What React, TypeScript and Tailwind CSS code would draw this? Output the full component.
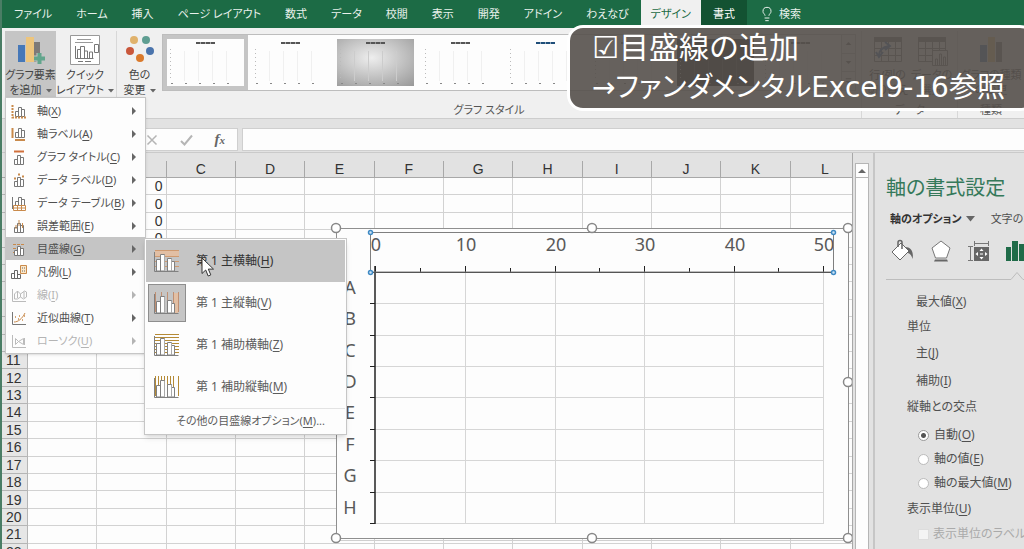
import { useState } from 'react'
import type { ReactNode } from 'react'
import { Lightbulb } from 'lucide-react'
import clsx from 'clsx'

const TABS = [
  'ファイル', 'ホーム', '挿入', 'ページ レイアウト', '数式', 'データ', '校閲', '表示', '開発', 'アドイン', 'わえなび',
]

const COLUMNS = ['A', 'B', 'C', 'D', 'E', 'F', 'G', 'H', 'I', 'J', 'K', 'L']
const ROWS = Array.from({ length: 22 }, (_, i) => i + 1)

const ORANGE = '#c98a4b'
const GRAY = '#777777'

// Label with an underlined access key, e.g. 軸(X)
function Key({ text, k, after = '' }: { text: string; k: string; after?: string }) {
  return (
    <span className="whitespace-nowrap">
      {text}(<span className="underline underline-offset-2">{k}</span>){after}
    </span>
  )
}

function Caret() {
  return (
    <svg width="6" height="4" viewBox="0 0 6 4" className="inline-block align-middle ml-1">
      <path d="M0 0h6L3 3.5z" fill="#666" />
    </svg>
  )
}

// ── Element menu icons ──────────────────────────────────────

function Bars({ color = GRAY }: { color?: string }) {
  return (
    <g fill="#fff" stroke={color}>
      <path d="M4.5 14.5v-5h3v5zM7.5 14.5v-9h3v9zM10.5 14.5v-7h3v7z" />
    </g>
  )
}

const MENU_ICONS: Record<string, ReactNode> = {
  axis: (
    <>
      <g transform="translate(0 -1)"><Bars /></g>
      <path d="M1.5 2v12.500H16" stroke={ORANGE} strokeWidth="2" strokeDasharray="2 1" fill="none" />
    </>
  ),
  axisTitle: (
    <>
      <g transform="translate(0 -3)"><Bars /></g>
      <path d="M1.5 2v10" stroke={ORANGE} strokeWidth="2" />
      <path d="M4 14h10" stroke={ORANGE} strokeWidth="2" />
    </>
  ),
  title: (
    <>
      <path d="M3 2.5h10" stroke="#d0703c" strokeWidth="2" />
      <g transform="translate(-1 1)"><Bars /></g>
    </>
  ),
  dataLabel: (
    <>
      <path d="M3 6.500h2M7 2.500h2M11 4.500h2" stroke={ORANGE} strokeWidth="2" />
      <g transform="translate(-1 0)"><Bars /></g>
    </>
  ),
  dataTable: (
    <>
      <path d="M1.5 2v12" stroke={GRAY} />
      <g transform="translate(0 -3)"><Bars /></g>
      <path d="M2.500 10.500h12v5h-12zM2.500 13h12M6.500 10.500v5M10.500 10.500v5" stroke={ORANGE} fill="#fff" />
    </>
  ),
  errorBar: (
    <>
      <g transform="translate(-1 0)"><Bars /></g>
      <path d="M8 2v6M5 7v4M11.500 5v5" stroke={ORANGE} />
    </>
  ),
  grid: (
    <>
      <path d="M2 3.5h12M2 7.5h12M2 11.5h12" stroke={ORANGE} strokeDasharray="3 1" />
      <g transform="translate(-1 0)"><Bars /></g>
    </>
  ),
  legend: (
    <>
      <path d="M.5 14.500v-5h3v5zM3.500 14.500v-8h3v8zM6.500 14.500v-4h3v4z" fill="#fff" stroke="#666" />
      <path d="M9.500 1.500h6v8h-6z" fill="#fbe7c8" stroke={ORANGE} />
      <path d="M11 4h1M13 4h1M11 7h1M13 7h1" stroke="#666" />
    </>
  ),
  line: (
    <path d="M1.500 2v12.500h13.500M3.500 12V7l3-3 3 3 4-3 2 1v5l-3 2-3-2-3 2zM6.500 4v7M9.500 7v3M13 4.500V11" stroke="#bbb" fill="none" />
  ),
  trend: (
    <>
      <path d="M1.5 2v12.500h13.500" stroke={GRAY} fill="none" />
      <path d="M3 12c4 0 8-3 11-9" stroke={ORANGE} fill="none" />
      <path d="M4 7h1M7 9h1M8 6h1M11 10h1M13 6h1" stroke={ORANGE} strokeWidth="1.500" />
    </>
  ),
  updown: (
    <>
      <path d="M1.5 2v12.500h13.500" stroke="#bbb" fill="none" />
      <path d="M4.500 5.500l3 3-3 3zM7.500 8.500l5-3v6zM13.500 5v7" stroke="#bbb" fill="none" />
    </>
  ),
}

const MENU = [
  { icon: 'axis', text: '軸', k: 'X' },
  { icon: 'axisTitle', text: '軸ラベル', k: 'A' },
  { icon: 'title', text: 'グラフ タイトル', k: 'C' },
  { icon: 'dataLabel', text: 'データ ラベル', k: 'D' },
  { icon: 'dataTable', text: 'データ テーブル', k: 'B' },
  { icon: 'errorBar', text: '誤差範囲', k: 'E' },
  { icon: 'grid', text: '目盛線', k: 'G', active: true },
  { icon: 'legend', text: '凡例', k: 'L' },
  { icon: 'line', text: '線', k: 'I', disabled: true },
  { icon: 'trend', text: '近似曲線', k: 'T' },
  { icon: 'updown', text: 'ローソク', k: 'U', disabled: true },
]

function ElementMenu() {
  return (
    <div role="menu" className="absolute left-[3px] top-[97px] w-[141px] py-px bg-[#fdfdfd] border border-[#c6c6c6] shadow-sm z-20">
      {MENU.map((m) => (
        <button
          key={m.icon}
          role="menuitem"
          disabled={m.disabled}
          className={clsx(
            'w-full h-[23px] flex items-center pl-[5px] pr-2 text-[11px] leading-4',
            m.active && 'bg-[#c5c5c5]',
            m.disabled ? 'text-[#b4b4b4]' : 'text-[#505050]',
          )}
        >
          <svg width="16" height="16" viewBox="0 0 16 16" className="shrink-0">{MENU_ICONS[m.icon]}</svg>
          <span className="ml-[10px] flex-1 text-left"><Key text={m.text} k={m.k} /></span>
          <svg width="5" height="8" viewBox="0 0 5 8" className="shrink-0">
            <path d="M0 0l4 4-4 4z" fill={m.disabled ? '#b4b4b4' : '#666'} />
          </svg>
        </button>
      ))}
    </div>
  )
}

// ── Gridline submenu ────────────────────────────────────────

function GridIcon({ lines, color, fill }: { lines: string; color: string; fill?: string }) {
  return (
    <svg width="26" height="24" viewBox="0 0 26 24">
      {fill && <path d={fill} fill="#e2bfa4" />}
      <path d={lines} stroke={color} fill="none" />
      <path d="M2.500 22V10.500h4V22zM6.500 22V5.500h4V22zM13.500 22V9.500h4V22zM17.500 22v-9.500h3V22z" fill="#fff" stroke="#808080" />
      <path d="M10 6h1v16h-1zM17 10h1v12h-1z" fill="#aaa" />
      <path d="M.5 3v19.500h24" stroke="#808080" fill="none" />
    </svg>
  )
}

const GRIDLINES = [
  { text: '第 1 主横軸', k: 'H', color: '#cf9a70', fill: 'M1 2h24v5H1z', lines: 'M1 1.500h24M1 7.500h24M1 12.500h24M1 17.500h24' },
  { text: '第 1 主縦軸', k: 'V', color: '#c08f72', fill: 'M20 2h4v20h-4z', lines: 'M1.500 1v20M7.500 1v20M13.500 1v20M19.500 1v20M24.500 1v20' },
  { text: '第 1 補助横軸', k: 'Z', color: '#b58a35', lines: 'M1 1.500h24M1 4.500h24M1 7.500h24M1 10.500h24M1 13.500h24M1 16.500h24M1 19.500h24' },
  { text: '第 1 補助縦軸', k: 'M', color: '#b58a35', lines: 'M1.500 1v20M4.500 1v20M7.500 1v20M10.500 1v20M13.500 1v20M16.500 1v20M19.500 1v20M24.500 1v20' },
]

function GridlineMenu() {
  return (
    <div role="menu" className="absolute left-[142px] top-[238px] w-[203px] p-px bg-[#fdfdfd] border border-[#c6c6c6] shadow-md text-[12px] leading-4 text-[#5c5c5c] z-30">
      {GRIDLINES.map((g, i) => (
        <button
          key={g.k}
          role="menuitem"
          className={clsx('w-full h-[42px] flex items-center pl-0.5 gap-[10px]', i === 0 && 'bg-[#c5c5c5] text-[#333]')}
        >
          <span className={clsx('w-[38px] h-[38px] flex items-center justify-center', i === 1 && 'bg-[#c5c5c5] border border-[#8e8e8e]')}>
            <GridIcon lines={g.lines} color={g.color} fill={g.fill} />
          </span>
          <Key text={g.text} k={g.k} />
        </button>
      ))}
      <button role="menuitem" className="w-full h-[25px] pl-[30px] text-left text-[11px] border-t border-[#e3e3e3]">
        <Key text="その他の目盛線オプション" k="M" after="..." />
      </button>
      {/* Mouse pointer */}
      <svg width="14" height="21" viewBox="0 0 14 21" className="absolute left-[56px] top-[18px]">
        <path d="M1 1v15.500l3.700-3.500 2.500 6 2.600-1.100-2.500-5.800h5.200z" fill="#fff" stroke="#333" />
      </svg>
    </div>
  )
}

// ── Ribbon ──────────────────────────────────────────────────

function AddElementIcon() {
  return (
    <svg width="30" height="32" viewBox="0 0 30 32">
      <path d="M2 11h7v17H2z" fill="#4678b8" />
      <path d="M10 3h8v25h-8z" fill="#edc57c" />
      <path d="M18 8h6v20h-6z" fill="#7d7a78" />
      <path d="M23.500 19v11M18 24.500h11" stroke="#c5c5c5" strokeWidth="6" />
      <path d="M23.500 19v11M18 24.500h11" stroke="#62a58c" strokeWidth="4" />
    </svg>
  )
}

function QuickLayoutIcon() {
  return (
    <svg width="32" height="32" viewBox="0 0 32 32" fill="none" stroke="#777">
      <path d="M1.500 1.500h29v29h-29z" fill="#fff" stroke="#999" />
      <path d="M8 5.500h14M6 8.500h18" stroke="#999" />
      <path d="M6.500 12v12.500h18M8.500 24V15.500h3V24M11.500 24V12.500h4V24M15.500 24v-7h3v7M20.500 24v-6h3v6" />
      <path d="M25.500 10.500h4v8h-4zM9 27.500h5M16 27.500h6" />
    </svg>
  )
}

function ColorsIcon() {
  return (
    <svg width="32" height="32" viewBox="0 0 32 32">
      <circle cx="10" cy="6" r="4" fill="#e0b26c" />
      <circle cx="22" cy="6" r="4" fill="#5f9e92" />
      <circle cx="6" cy="17" r="4" fill="#c9573b" />
      <circle cx="26" cy="17" r="4" fill="#4a74ac" />
      <circle cx="16" cy="24" r="4" fill="#da7a2c" />
    </svg>
  )
}

function TableIcon({ swap = false }: { swap?: boolean }) {
  return (
    <svg width="32" height="32" viewBox="0 0 32 32" fill="none" stroke="#777">
      <path d="M2.500 3.500h27v24h-27z" fill="#fff" />
      <path d="M2 3h28v5H2z" fill="#777" stroke="none" />
      <path d="M2 14.500h28M2 21.500h28M9.500 8v20M16.500 8v20M23.500 8v20" />
      {swap ? (
        <path d="M7 22c0-6 4-9 10-10M13 8l5 4-5 4M4 18l3 5 4-5" stroke="#3f76b8" strokeWidth="2" />
      ) : (
        <path d="M16.500 16.500h15v15h-15zM19.500 31v-6h2v6M23.500 31V20h2v11M27.500 31v-8h2v8" fill="#fff" />
      )}
    </svg>
  )
}

function ChartTypeIcon() {
  return (
    <svg width="32" height="32" viewBox="0 0 32 32">
      <path d="M5 11h7v17H5z" fill="#4678b8" />
      <path d="M13 3h7v25h-7z" fill="#edc57c" />
      <path d="M21 8h6v20h-6z" fill="#7d7a78" />
    </svg>
  )
}

function RibbonButton({ icon, lines, caret, pressed, className }: {
  icon: ReactNode
  lines: string[]
  caret?: boolean
  pressed?: boolean
  className: string
}) {
  return (
    <button
      className={clsx(
        'flex flex-col items-center shrink-0 pt-[3px] text-[11px] leading-[15px] text-[#444] whitespace-nowrap',
        pressed && 'bg-[#c5c5c5]',
        className,
      )}
    >
      {icon}
      <span className="mt-px">{lines[0]}</span>
      <span>{lines[1]}{caret && <Caret />}</span>
    </button>
  )
}

const STYLES = ['selected', 'plain', 'shade', 'plain', 'blue', 'plain', 'dark', 'plain']

function StyleThumb({ kind }: { kind: string }) {
  const dark = kind === 'dark'
  return (
    <button
      aria-label="グラフ スタイル"
      className={clsx('w-[85px] h-[55px] shrink-0 p-1', kind === 'selected' && 'bg-[#c5c5c5]')}
    >
      <svg width="77" height="47" viewBox="0 0 77 47">
        <defs>
          <radialGradient id="shade" cx=".45" cy=".4" r=".8">
            <stop offset="0" stopColor="#eee" />
            <stop offset="1" stopColor="#999" />
          </radialGradient>
        </defs>
        <path d="M0 0h77v47H0z" fill={dark ? '#222' : kind === 'shade' ? 'url(#shade)' : '#fdfdfd'} />
        <path d="M29 4h19" stroke={kind === 'blue' ? '#1f4e79' : '#555'} strokeWidth="2" strokeDasharray="4 .5 5 .5" />
        <path d="M3.500 10v32" stroke="#bbb" strokeDasharray="1 3" />
        <path d="M4 44.500h70" stroke="#888" strokeDasharray="2 12" />
        <path d="M17.500 12v30M31.500 12v30M45.500 12v30M59.500 12v30" stroke={kind === 'shade' ? '#ccc' : dark ? '#444' : '#f0f0f0'} />
      </svg>
    </button>
  )
}

function GroupLabel({ children }: { children: ReactNode }) {
  return <div className="text-center text-[11px] leading-4 text-[#555] mt-auto">{children}</div>
}

function Ribbon() {
  return (
    <div className="h-[91px] shrink-0 flex bg-[#f0f0f0] border-b border-[#cdcdcd] pt-[3px] pl-[3px]">
      <div className="flex items-start w-[112px] shrink-0 border-r border-[#d8d8d8]">
        <RibbonButton className="w-[51px] h-[66px]" icon={<AddElementIcon />} lines={['グラフ要素', 'を追加']} caret pressed />
        <RibbonButton className="w-[58px] h-[66px]" icon={<QuickLayoutIcon />} lines={['クイック', 'レイアウト']} caret />
      </div>
      <div className="flex flex-col flex-1 min-w-0">
        <div className="flex">
          <RibbonButton className="w-[45px]" icon={<ColorsIcon />} lines={['色の', '変更']} caret />
          <div className="flex flex-1 min-w-0 h-[57px] mt-[3px] mr-[5px] border border-[#bdbdbd] bg-[#fdfdfd]">
            <div className="flex flex-1 min-w-0 overflow-hidden">
              {STYLES.map((s, i) => <StyleThumb key={i} kind={s} />)}
            </div>
            <div className="w-[14px] flex flex-col border-l border-[#bdbdbd] divide-y divide-[#bdbdbd] bg-[#f0f0f0]">
              {['M4 5h6L7 2z', 'M4 2h6L7 5z', 'M4 0h6v1H4zM4 3h6L7 6z'].map((d) => (
                <button key={d} aria-label="スクロール" className="flex-1 flex items-center">
                  <svg width="13" height="7" viewBox="0 0 14 7"><path d={d} fill="#666" /></svg>
                </button>
              ))}
            </div>
          </div>
        </div>
        <GroupLabel>グラフ スタイル</GroupLabel>
      </div>
      <div className="flex flex-col w-[96px] shrink-0 border-l border-[#d8d8d8]">
        <div className="flex justify-center">
          <RibbonButton className="w-[44px]" icon={<TableIcon swap />} lines={['行/列の', '切り替え']} />
          <RibbonButton className="w-[44px]" icon={<TableIcon />} lines={['データの', '選択']} />
        </div>
        <GroupLabel>データ</GroupLabel>
      </div>
      <div className="flex flex-col w-[67px] shrink-0 border-l border-[#d8d8d8]">
        <RibbonButton className="w-full" icon={<ChartTypeIcon />} lines={['グラフの種類', 'の変更']} />
        <GroupLabel>種類</GroupLabel>
      </div>
    </div>
  )
}

function TabBar() {
  return (
    <nav className="h-7 shrink-0 flex items-stretch bg-[#1c6b45] text-[#e9f1ec] text-[11px] leading-4 whitespace-nowrap">
      {TABS.map((t) => <button key={t} className="px-3">{t}</button>)}
      <button className="px-[10px] bg-[#f0f0f0] text-[#1c6b45]">デザイン</button>
      <button className="px-3 bg-[#135232] text-white">書式</button>
      <button className="px-3 flex items-center gap-1">
        <Lightbulb size={16} strokeWidth={1.5} />検索
      </button>
    </nav>
  )
}

function FormulaBar() {
  return (
    <div className="h-[34px] shrink-0 flex gap-1 pt-[9px] pb-px pl-[3px] bg-[#e2e2e2] border-b border-[#cacaca]">
      <input aria-label="名前ボックス" className="w-[110px] bg-[#fdfdfd] border border-[#cfcfcf]" />
      <div className="w-[119px] flex items-center justify-between pl-[26px] pr-3 bg-[#fdfdfd] border border-[#cfcfcf]">
        <button aria-label="キャンセル">
          <svg width="12" height="12" viewBox="0 0 12 12"><path d="M1.500 1.500l9 9M10.500 1.500l-9 9" stroke="#b5b5b5" strokeWidth="1.500" /></svg>
        </button>
        <button aria-label="入力">
          <svg width="13" height="12" viewBox="0 0 13 12"><path d="M1 7l3.500 3.500L12 1.500" stroke="#b5b5b5" strokeWidth="2" fill="none" /></svg>
        </button>
        <button className="font-['Liberation_Serif',serif] italic font-bold text-[15px] leading-4 text-[#666]">
          f<span className="text-[11px]">x</span>
        </button>
      </div>
      <input aria-label="数式バー" className="flex-1 min-w-0 bg-[#fdfdfd] border border-r-0 border-[#cfcfcf]" />
    </div>
  )
}

// ── Sheet ───────────────────────────────────────────────────

const X_STEPS = [375, 465, 555, 644, 734, 823]
const Y_STEPS = [272, 303, 335, 366, 397, 429, 460, 492, 523]
const HANDLES = [[336, 228], [592, 228], [848, 228], [336, 382], [848, 382], [336, 538], [592, 538], [848, 538]]

function Chart() {
  return (
    <svg
      width="524"
      height="322"
      viewBox="330 222 524 322"
      className="absolute left-[328px] top-[69px] font-['Noto_Sans',sans-serif]"
    >
      <rect x="336.500" y="228.500" width="512" height="310" fill="#fdfdfd" stroke="#8f8f8f" />
      <path d="M338 540.500h510" stroke="#cfcfcf" />

      {/* Gridlines */}
      {X_STEPS.slice(1).map((x) => <path key={x} d={`M${x}.5 272v251`} stroke="#d6d6d6" />)}
      {Y_STEPS.slice(1).map((y) => <path key={y} d={`M375 ${y}.5h449`} stroke="#d6d6d6" />)}

      {/* Axes and ticks */}
      <path d="M375 266v258" stroke="#222" strokeWidth="1.500" />
      {Y_STEPS.slice(1).map((y) => <path key={y} d={`M370 ${y}.5h5`} stroke="#222" />)}
      {X_STEPS.map((x) => <path key={x} d={`M${x}.5 266v6`} stroke="#222" />)}
      {[420, 510, 599, 689, 778].map((x) => <path key={x} d={`M${x}.5 268v4`} stroke="#222" />)}

      <g fontSize="18" fill="#595959" textAnchor="middle">
        {X_STEPS.map((x, i) => <text key={x} x={x + 1} y="251">{i * 10}</text>)}
        {['A', 'B', 'C', 'D', 'E', 'F', 'G', 'H'].map((c, i) => (
          <text key={c} x="350" y={Y_STEPS[i] + 22}>{c}</text>
        ))}
      </g>

      {/* Selected axis */}
      <path d="M370.500 232.500h463v39.500h-463z" fill="none" stroke="#7f7f7f" />
      <path d="M370 272.500h464" stroke="#555" />
      {[[370.5, 232.5], [833.5, 232.5], [370.5, 272.5], [833.5, 272.5]].map(([x, y]) => (
        <circle key={`${x}-${y}`} cx={x} cy={y} r="2" fill="#cfe4f5" stroke="#3f8ac4" strokeWidth="1.500" />
      ))}
      {HANDLES.map(([x, y]) => (
        <circle key={`${x}-${y}`} cx={x} cy={y} r="4.500" fill="#fff" stroke="#888" strokeWidth="1.500" />
      ))}
    </svg>
  )
}

function Sheet() {
  return (
    <div className="relative flex-1 min-w-0 overflow-hidden pt-2 border-r border-[#a8a8a8]">
      <table className="table-fixed w-[858px] h-[400px] border-separate border-spacing-0 bg-[#fdfdfd] font-['Liberation_Sans',sans-serif] text-[14px] leading-4 text-[#333]">
        <thead>
          <tr className="h-[17px] bg-[#e2e2e2]">
            <th className="w-[26px] p-0 border-r border-b border-[#a8a8a8]" />
            {COLUMNS.map((c) => <th key={c} className="p-0 font-normal border-r border-b border-[#a8a8a8]">{c}</th>)}
          </tr>
        </thead>
        <tbody>
          {ROWS.map((r) => (
            <tr key={r}>
              <th className="p-0 pl-1 text-left font-normal bg-[#e6e6e6] border-r border-b border-[#b5b5b5]">{r}</th>
              {COLUMNS.map((c) => (
                <td key={c} className="p-0 pr-[3px] text-right border-r border-b border-[#d2d2d2]">
                  {c === 'B' && r < 11 ? 0 : ''}
                </td>
              ))}
            </tr>
          ))}
        </tbody>
      </table>
      <Chart />
    </div>
  )
}

// ── Format axis pane ────────────────────────────────────────

const CROSSINGS = [
  { text: '自動', k: 'O' },
  { text: '軸の値', k: 'E' },
  { text: '軸の最大値', k: 'M' },
]

function FormatPane() {
  const [crossing, setCrossing] = useState('O')

  return (
    <aside className="w-[151px] shrink-0 overflow-hidden pl-[11px] pt-[23px] border-l-2 border-[#c6c6c6] text-[12px] leading-6 text-[#505050] whitespace-nowrap">
      <h2 className="text-[20px] leading-6 text-[#35795a]">軸の書式設定</h2>
      <div className="flex items-center mt-[7px] pl-1">
        <button className="font-bold text-[11px] text-[#333] flex items-center gap-1">
          軸のオプション
          <svg width="9" height="6" viewBox="0 0 9 6"><path d="M0 0h9L4.500 5.500z" fill="#666" /></svg>
        </button>
        <button className="ml-4 text-[11px]">文字のオプション</button>
      </div>
      <div className="flex items-center gap-[14px] mt-1 pl-[5px] h-8">
        <button aria-label="塗りつぶしと線">
          <svg width="24" height="24" viewBox="0 0 24 24">
            <path d="M10 4l8 8-9 9-8-8z" fill="#fff" stroke="#666" />
            <path d="M7 8V3.500a2 2 0 0 1 4 0V10" fill="none" stroke="#666" strokeWidth="1.500" />
            <path d="M14 8c6 0 9 5 7.500 12-1-4-3-6-5-6l1.500-2z" fill="#666" />
          </svg>
        </button>
        <button aria-label="効果">
          <svg width="24" height="24" viewBox="0 0 24 24">
            <path d="M12 2l9 7-3.500 10h-11L3 9z" fill="#fff" stroke="#777" />
            <path d="M6 20.500h12l1 2H5z" fill="#666" />
          </svg>
        </button>
        <button aria-label="サイズとプロパティ">
          <svg width="24" height="24" viewBox="0 0 24 24">
            <path d="M7 4.500h15M7.500 2v5M21.500 2v5M3.500 7v15M1 7.500h5M1 21.500h5" stroke="#777" />
            <path d="M7 8h15v14H7z" fill="#666" />
            <path d="M14.500 9.500l2 2.500h-4zM14.500 20.500l2-2.500h-4zM8.500 15l2.500-2v4zM20.500 15L18 13v4z" fill="#fff" />
            <path d="M13 15h3" stroke="#fff" />
          </svg>
        </button>
        <button aria-label="軸のオプション">
          <svg width="24" height="24" viewBox="0 0 24 24">
            <path d="M1 8h5v14H1zM7 2h6v20H7zM14 5h5v17h-5zM20 10h4v12h-4z" fill="#1f6b48" />
          </svg>
        </button>
      </div>
      <svg width="150" height="14" viewBox="0 0 150 14" className="block max-w-none">
        <path d="M0 12.500h125l6-7 6 7h13" fill="none" stroke="#bdbdbd" />
      </svg>
      <div className="flex flex-col pl-[21px] mt-[9px]">
        <div className="pl-[9px]"><Key text="最大値" k="X" /></div>
        <div className="mt-px">単位</div>
        <div className="mt-0.5 pl-[9px]"><Key text="主" k="J" /></div>
        <div className="mt-1 pl-[9px]"><Key text="補助" k="I" /></div>
        <fieldset>
          <legend className="pt-0.5">縦軸との交点</legend>
          <div className="pt-1 pl-[11px]">
            {CROSSINGS.map((c) => (
              <label key={c.k} className="flex items-center gap-[5px]">
                <input
                  type="radio"
                  name="crossing"
                  checked={crossing === c.k}
                  onChange={() => setCrossing(c.k)}
                  className="appearance-none w-[11px] h-[11px] rounded-full bg-white border border-[#bbb] checked:border-[#999] checked:bg-[radial-gradient(#555_0_2px,#fff_3px)]"
                />
                <Key text={c.text} k={c.k} />
              </label>
            ))}
          </div>
        </fieldset>
        <div className="mt-0.5"><Key text="表示単位" k="U" /></div>
        <label className="mt-px pl-[11px] flex items-center gap-1 text-[#aaa]">
          <input type="checkbox" disabled className="appearance-none shrink-0 w-[11px] h-[11px] bg-[#f4f4f4] border border-[#ddd]" />
          表示単位のラベルをグラフに表示する
        </label>
      </div>
    </aside>
  )
}

export default function App() {
  return (
    <div className="relative h-screen flex flex-col overflow-hidden border-l-2 border-[#4a7d65] bg-[#e2e2e2] font-['Noto_Sans','Noto_Sans_CJK_JP',sans-serif] [font-feature-settings:'palt']">
      <TabBar />
      <Ribbon />
      <FormulaBar />
      <main className="flex-1 min-h-0 flex">
        <Sheet />
        <div className="w-[20px] shrink-0 flex flex-col pt-[10px] pl-0.5 pr-1">
          <button aria-label="上へスクロール" className="h-[15px] flex items-center justify-center bg-[#fdfdfd] border border-[#b5b5b5]">
            <svg width="8" height="4" viewBox="0 0 8 4"><path d="M0 4h8L4 0z" fill="#666" /></svg>
          </button>
          <div className="flex-1 bg-[#fdfdfd] border-x border-[#b5b5b5]" />
        </div>
        <FormatPane />
      </main>

      <ElementMenu />
      <GridlineMenu />

      {/* Caption */}
      <div className="absolute left-[565px] -right-3 top-[25px] pl-[22px] rounded-[16px] border-[3px] border-white bg-[#55504b]/90 text-white leading-10 whitespace-nowrap font-['DejaVu_Sans','Noto_Sans_CJK_JP',sans-serif] z-40">
        <p className="text-[30px] leading-10 [font-feature-settings:normal]">☑目盛線の追加</p>
        <p className="text-[28px] leading-10">→ファンダメンタルExcel9-16参照</p>
      </div>
    </div>
  )
}
